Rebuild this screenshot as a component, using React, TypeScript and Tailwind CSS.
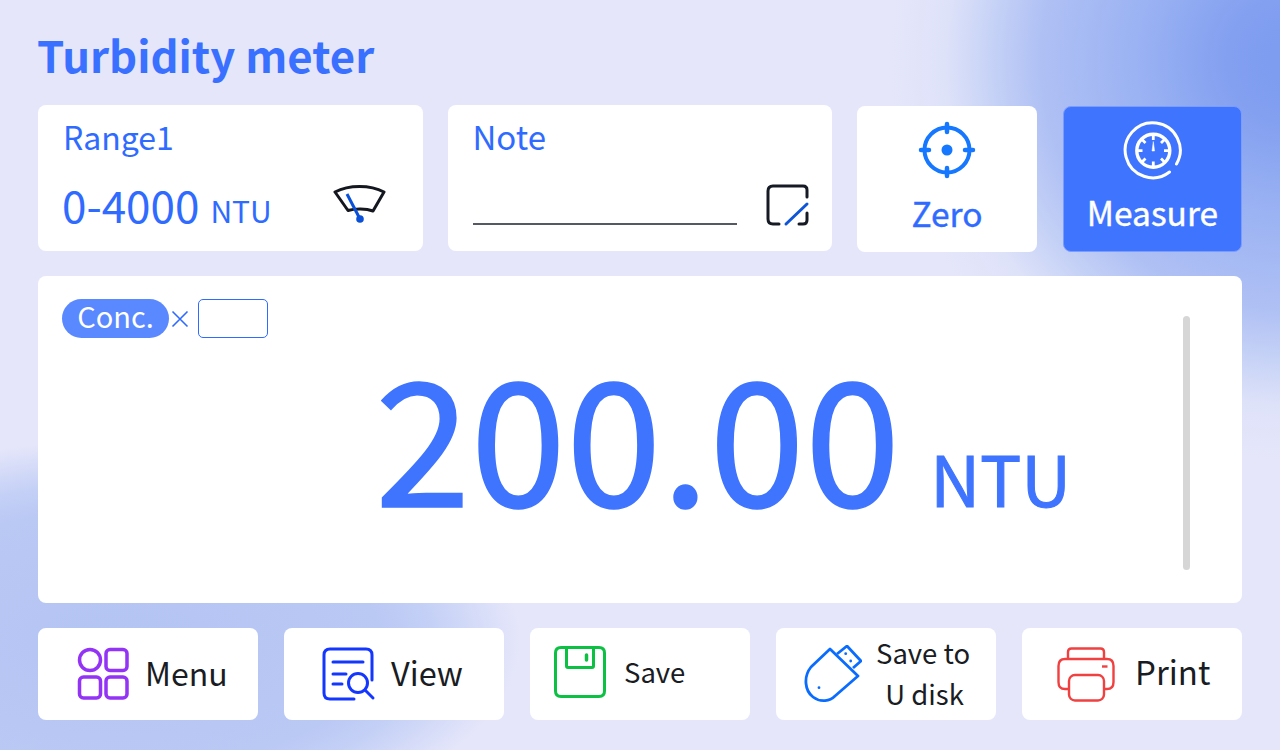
const FONT = "font-['Noto_Sans_CJK_SC','Noto_Sans',sans-serif]";

function Gauge() {
  return (
    <svg width="54" height="40" viewBox="0 0 54 40" fill="none">
      <path d="M2 8 C16 0.500 37 0.500 51 8 L40 27 C33 24.500 22 24.500 15 26.500 Z" stroke="#14171f" strokeWidth="3" strokeLinejoin="round" />
      <path d="M14 10 L27 35" stroke="#0b50d8" strokeWidth="3" />
      <circle cx="27" cy="35" r="3.800" fill="#0b50d8" />
    </svg>
  );
}

function NoteIcon() {
  return (
    <svg width="44" height="44" viewBox="0 0 44 44" fill="none">
      <path d="M41 14 V7 Q41 3 37 3 H7 Q2 3 2 8 V36 Q2 41 7 41 H13 M33 41 H37 Q41 41 41 37 V30" stroke="#161a24" strokeWidth="3" strokeLinecap="round" />
      <path d="M20 41 L41 21" stroke="#0f55d8" strokeWidth="3" strokeLinecap="round" />
    </svg>
  );
}

function ZeroIcon() {
  return (
    <svg width="58" height="58" viewBox="0 0 58 58" fill="none">
      <circle cx="29" cy="29" r="22.500" stroke="#1677ff" strokeWidth="4" />
      <circle cx="29" cy="29" r="5.500" fill="#1677ff" />
      <path d="M29 3 V11 M29 47 V55 M3 29 H11 M47 29 H55" stroke="#1677ff" strokeWidth="4.500" strokeLinecap="round" />
    </svg>
  );
}

function MeasureIcon() {
  return (
    <svg width="60" height="60" viewBox="0 0 60 60" fill="none" stroke="#fff">
      <path d="M53.500 44 A27.500 27.500 0 1 0 46.500 52" strokeWidth="3" strokeLinecap="round" />
      <circle cx="30.300" cy="30.700" r="16.500" strokeWidth="3.400" />
      <path d="M30.300 15 V20 M30.300 41.500 V46.500 M14.500 30.700 H19.500 M41 30.700 H46 M19 19.500 L22.500 23 M41.500 19.500 L38 23 M19 42 L22.500 38.500 M41.500 42 L38 38.500" strokeWidth="2.800" />
      <path d="M30.300 21.500 L31.600 31 H29 Z" fill="#fff" strokeWidth="0.500" />
    </svg>
  );
}

function MenuIcon() {
  return (
    <svg width="54" height="54" viewBox="0 0 54 54" fill="none" stroke="#9233f5" strokeWidth="3.500">
      <circle cx="13" cy="13" r="10.500" />
      <rect x="29" y="2.500" width="21" height="21" rx="4" />
      <rect x="2.500" y="30" width="21" height="21" rx="4" />
      <rect x="29" y="30" width="21" height="21" rx="4" />
    </svg>
  );
}

function ViewIcon() {
  return (
    <svg width="54" height="54" viewBox="0 0 54 54" fill="none" stroke="#1437ff" strokeWidth="3" strokeLinecap="round">
      <path d="M50 33 V8 Q50 2 44 2 H8 Q2 2 2 8 V46 Q2 52 8 52 H32" />
      <path d="M11 15 H41 M11 27 H24 M11 37 H20" />
      <circle cx="36" cy="36" r="9.500" />
      <path d="M43 43 L51 51" />
    </svg>
  );
}

function SaveIcon() {
  return (
    <svg className="mb-[4px]" width="52" height="52" viewBox="0 0 52 52" fill="none" stroke="#0cc043" strokeWidth="3" strokeLinejoin="round">
      <path d="M7 1.500 H45 Q50.500 1.500 50.500 7 V45 Q50.500 50.500 45 50.500 H7 Q1.500 50.500 1.500 45 V7 Q1.500 1.500 7 1.500 Z" />
      <path d="M12.500 1.500 V20 Q12.500 21.500 14 21.500 H38 Q39.500 21.500 39.500 20 V1.500" />
      <path d="M32.500 9 V14" strokeWidth="3.500" strokeLinecap="round" />
    </svg>
  );
}

function UsbIcon() {
  return (
    <svg width="58" height="58" viewBox="0 0 58 58" fill="none" stroke="#0a6cff" strokeWidth="2.800" strokeLinejoin="round">
      <path d="M26 4 L7 22 C-1 32 1 46 9 52 C17 58 26 56 31 51 L54 31 Z" />
      <path d="M33 9 L43 1 L57 16 L49 23" />
      <circle cx="15" cy="42.700" r="1.400" fill="#0a6cff" stroke="none" />
      <circle cx="41.700" cy="8.700" r="1.400" fill="#0a6cff" stroke="none" />
      <circle cx="46.700" cy="16" r="1.400" fill="#0a6cff" stroke="none" />
    </svg>
  );
}

function PrintIcon() {
  return (
    <svg className="mt-[1px]" width="58" height="55" viewBox="0 0 58 55" fill="none" stroke="#f04040" strokeWidth="2.400">
      <path d="M11 12 V5 Q11 1.500 14.500 1.500 H43.500 Q47 1.500 47 5 V12" />
      <path d="M12 42 H8 Q1.500 42 1.500 35 V19 Q1.500 12 8 12 H50 Q56.500 12 56.500 19 V35 Q56.500 42 50 42 H47" />
      <rect x="12" y="28" width="35" height="25.500" rx="6" />
      <path d="M45 19.500 H50.500" />
    </svg>
  );
}

function BottomButton({ icon, gap, pl, children, text }: { icon: React.ReactNode; gap: string; pl: string; children: React.ReactNode; text: string }) {
  return (
    <button className={`flex h-[92px] w-[220px] items-center rounded-lg bg-white text-[#191c22] ${gap} ${pl} ${text}`}>
      {icon}
      {children}
    </button>
  );
}

export default function App() {
  return (
    <div className={`${FONT} flex h-[750px] w-[1280px] flex-col overflow-hidden bg-[#e5e6fa] bg-[radial-gradient(circle_at_1290px_60px,#7d9cf0_0px,#829ff0_60px,#9ab2f3_150px,#afc0f4_250px,#c6d2f6_300px,#dee2f9_345px,#e5e6fa_400px,transparent_420px),radial-gradient(ellipse_400px_200px_at_120px_640px,#b4c4f3_0%,#bac8f4_65%,#c4d0f6_78%,#e5e6fa_100%)] px-[38px]`}>
      <h1 className="-ml-px mt-[25px] h-[80px] text-[43.700px] font-bold leading-[58px] text-[#3a70ff]">Turbidity meter</h1>

      <div className="flex h-[147px] gap-[25px]">
        <div className="h-[146px] w-[384.500px] rounded-lg bg-white pl-[24px] pr-[36px] text-[#2f6bff]">
          <div className="ml-px mt-[9px] text-[32px] leading-[44px]">Range1</div>
          <div className="mt-[16px] flex items-center justify-between">
            <div className="flex items-baseline gap-[11px]">
              <span className="text-[44px] leading-[60px]">0-4000</span>
              <span className="text-[30px] leading-[40px]">NTU</span>
            </div>
            <Gauge />
          </div>
        </div>

        <div className="h-[146px] w-[384.500px] rounded-lg bg-white pl-[25px] pr-[22px] text-[#2f6bff]">
          <div className="mt-[9px] text-[33px] leading-[44px]">Note</div>
          <div className="mt-[25px] flex items-end justify-between">
            <div className="mb-[2px] h-[2px] w-[264px] bg-[#555a62]" />
            <NoteIcon />
          </div>
        </div>

        <button className="mt-[1px] flex w-[180px] flex-col items-center rounded-lg bg-white pt-[15px] text-[33.500px] leading-[44px] text-[#2f6bff] [-webkit-text-stroke:0.4px_#2f6bff]">
          <ZeroIcon />
          <span className="mt-[12px]">Zero</span>
        </button>

        <button className="ml-px mt-[1px] flex w-[179px] flex-col items-center rounded-lg border border-[#7d9cff] bg-[#3f74ff] pt-[13px] text-[33.500px] leading-[44px] text-white [-webkit-text-stroke:0.4px_#ffffff]">
          <MeasureIcon />
          <span className="mt-[10px]">Measure</span>
        </button>
      </div>

      <div className="relative mt-[24px] h-[327px] rounded-lg bg-white pl-[24px] pt-[23px]">
        <div className="flex items-center">
          <span className="flex h-[39px] w-[107px] items-center justify-center rounded-full bg-[#5a88ff] pb-[6px] text-[29px] leading-none text-white">Conc.</span>
          <span className="flex w-[22px] justify-center">
            <svg width="18" height="18" viewBox="0 0 18 18" stroke="#2f6bff" strokeWidth="1.600"><path d="M1.500 1.500 L16.500 16.500 M16.500 1.500 L1.500 16.500" /></svg>
          </span>
          <span className="ml-[7px] h-[39px] w-[70px] rounded-[5px] border border-[#2f6bff]" />
        </div>
        <div className="ml-[313px] mt-[-16px] flex items-baseline gap-[30px] text-[#3f74ff]">
          <span className="text-[172px] leading-[220px] [-webkit-text-stroke:1.500px_#3f74ff]">200.00</span>
          <span className="text-[69px] leading-[100px] [-webkit-text-stroke:1px_#3f74ff]">NTU</span>
        </div>
        <div className="absolute right-[52px] top-[40px] h-[254px] w-[7px] rounded-full bg-[#d6d6d6]" />
      </div>

      <div className="mt-[25px] flex gap-[26px]">
        <BottomButton icon={<MenuIcon />} gap="gap-[14px]" pl="pl-[39px]" text="text-[32px]"><span className="mb-[4px]">Menu</span></BottomButton>
        <BottomButton icon={<ViewIcon />} gap="gap-[15px]" pl="pl-[38px]" text="text-[32.500px]"><span className="mb-[4px]">View</span></BottomButton>
        <BottomButton icon={<SaveIcon />} gap="gap-[18px]" pl="pl-[24px]" text="text-[27.500px]"><span className="mb-[4px]">Save</span></BottomButton>
        <BottomButton icon={<UsbIcon />} gap="gap-[14px]" pl="pl-[28px]" text="text-[27.500px]"><span className="mb-[2px] text-center leading-[41px]">Save to<br /><span className="ml-[3px]">U disk</span></span></BottomButton>
        <BottomButton icon={<PrintIcon />} gap="gap-[20px]" pl="pl-[35px]" text="text-[33px]"><span className="mb-[4px]">Print</span></BottomButton>
      </div>
    </div>
  );
}
